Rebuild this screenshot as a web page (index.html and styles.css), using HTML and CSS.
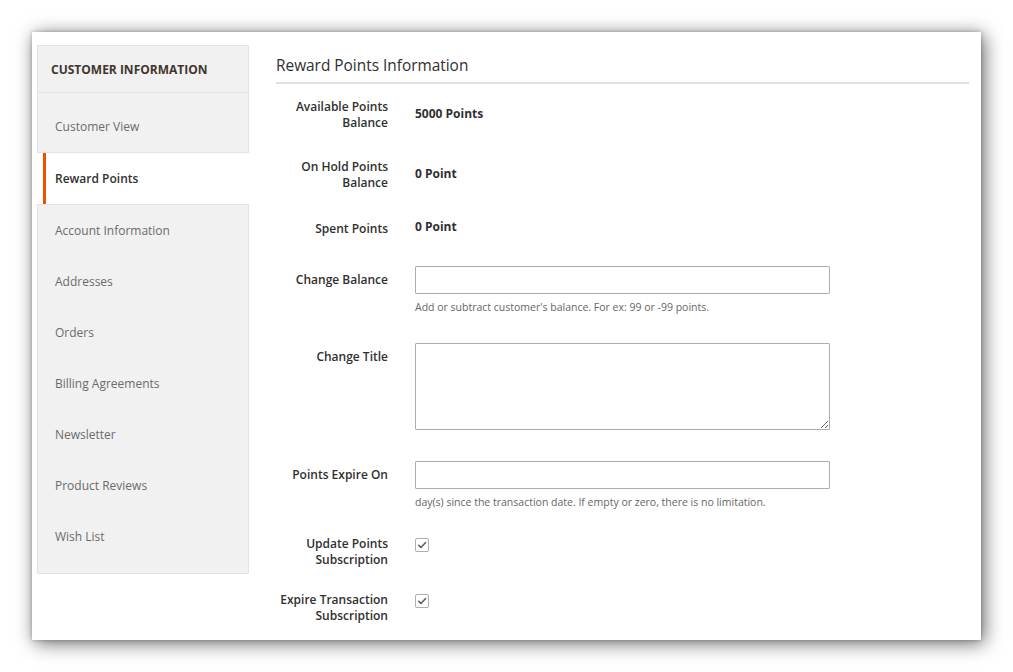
FILE: index.html
```html
<!DOCTYPE html>
<html lang="en">
<head>
<meta charset="utf-8">
<title>Reward Points Information</title>
<link rel="stylesheet" href="styles.css">
</head>
<body>
<div class="card">
  <aside class="sidebar">
    <div class="nav-group">
      <div class="nav-title">CUSTOMER INFORMATION</div>
      <ul class="nav-list">
        <li class="nav-item">Customer View</li>
      </ul>
    </div>
    <div class="nav-active">Reward Points</div>
    <div class="nav-group">
      <ul class="nav-list nav-list--rest">
        <li class="nav-item">Account Information</li>
        <li class="nav-item">Addresses</li>
        <li class="nav-item">Orders</li>
        <li class="nav-item">Billing Agreements</li>
        <li class="nav-item">Newsletter</li>
        <li class="nav-item">Product Reviews</li>
        <li class="nav-item">Wish List</li>
      </ul>
    </div>
  </aside>
  <main class="main">
    <h2 class="legend">Reward Points Information</h2>
    <div class="form">
      <div class="field field--static">
        <div class="label">Available Points<br>Balance</div>
        <div class="value">5000 Points</div>
      </div>
      <div class="field field--static">
        <div class="label">On Hold Points<br>Balance</div>
        <div class="value">0 Point</div>
      </div>
      <div class="field field--static">
        <div class="label">Spent Points</div>
        <div class="value">0 Point</div>
      </div>
      <div class="field">
        <div class="label label--input">Change Balance</div>
        <div class="control">
          <input class="text-input" type="text">
          <div class="note">Add or subtract customer's balance. For ex: 99 or -99 points.</div>
        </div>
      </div>
      <div class="field field--textarea">
        <div class="label label--input">Change Title</div>
        <div class="control">
          <textarea class="text-area"></textarea>
        </div>
      </div>
      <div class="field field--last-input">
        <div class="label label--input">Points Expire On</div>
        <div class="control">
          <input class="text-input" type="text">
          <div class="note">day(s) since the transaction date. If empty or zero, there is no limitation.</div>
        </div>
      </div>
      <div class="field field--check">
        <div class="label">Update Points<br>Subscription</div>
        <div class="control">
          <span class="checkbox"><svg width="12" height="12" viewBox="0 0 12 12"><path d="M2.6 6.2 L5 8.4 L9.6 3.6" fill="none" stroke="#5a5a5a" stroke-width="1.5" stroke-linecap="round" stroke-linejoin="round"/></svg></span>
        </div>
      </div>
      <div class="field field--check">
        <div class="label">Expire Transaction<br>Subscription</div>
        <div class="control">
          <span class="checkbox"><svg width="12" height="12" viewBox="0 0 12 12"><path d="M2.6 6.2 L5 8.4 L9.6 3.6" fill="none" stroke="#5a5a5a" stroke-width="1.5" stroke-linecap="round" stroke-linejoin="round"/></svg></span>
        </div>
      </div>
    </div>
  </main>
</div>
</body>
</html>
```

FILE: styles.css
```css
* { box-sizing: border-box; }

html, body {
  margin: 0;
  background: #ffffff;
}

body {
  padding: 32px;
  font-family: "Open Sans", "Liberation Sans", sans-serif;
  color: #303030;
}

.card {
  width: 949px;
  height: 608px;
  background: #ffffff;
  box-shadow: 3px 3px 18px rgba(0, 0, 0, 0.6), 0 0 4px rgba(0, 0, 0, 0.25);
  display: flex;
  align-items: flex-start;
  padding: 13px 12px 0 5px;
  overflow: hidden;
}

/* Sidebar */
.sidebar {
  width: 212px;
  flex: none;
  display: flex;
  flex-direction: column;
}

.nav-group {
  background: #f1f1f1;
  border: 1px solid #e3e3e3;
}

.nav-title {
  height: 47px;
  line-height: 47px;
  padding: 0 13px;
  border-bottom: 1px solid #e3e3e3;
  font-size: 12px;
  font-weight: 700;
  color: #41362f;
}

.nav-list {
  list-style: none;
  margin: 0;
  padding: 8px 0 0;
}

.nav-list--rest {
  padding: 0 0 11px;
}

.nav-item {
  height: 51px;
  line-height: 51px;
  padding-left: 17px;
  font-size: 12px;
  color: #6b6b6b;
}

.nav-active {
  height: 51px;
  line-height: 51px;
  margin-left: 6px;
  border-left: 3px solid #eb5202;
  padding-left: 9px;
  background: #ffffff;
  font-size: 12px;
  font-weight: 600;
  color: #303030;
}

/* Main */
.main {
  flex: 1;
  margin-left: 27px;
  margin-top: 11px;
}

.legend {
  margin: 0;
  font-size: 15.4px;
  font-weight: 400;
  line-height: 20px;
  color: #303030;
  padding-bottom: 6px;
  border-bottom: 2px solid #e2e0d9;
}

.form {
  padding-top: 15px;
}

.field {
  display: flex;
  align-items: flex-start;
  gap: 27px;
  margin-bottom: 28px;
}

.field--static {
  align-items: center;
}

.field--textarea {
  margin-bottom: 31px;
}

.field--last-input {
  margin-bottom: 26px;
}

.field--check {
  margin-bottom: 24px;
}

.label {
  width: 112px;
  flex: none;
  text-align: right;
  font-size: 12px;
  font-weight: 600;
  line-height: 16px;
  color: #303030;
}

.label--input {
  padding-top: 6px;
}

.value {
  font-size: 12px;
  font-weight: 700;
  line-height: 16px;
  margin-bottom: 3px;
  color: #303030;
}

.control {
  width: 415px;
}

.text-input {
  display: block;
  width: 415px;
  height: 28px;
  margin: 0;
  border: 1px solid #adadad;
  border-radius: 1px;
  background: #ffffff;
  font: 12px "Open Sans", sans-serif;
  padding: 0 8px;
}

.text-area {
  display: block;
  width: 415px;
  height: 87px;
  margin: 0;
  border: 1px solid #adadad;
  border-radius: 1px;
  background: #ffffff;
  font: 12px "Open Sans", sans-serif;
  resize: both;
}

.note {
  margin-top: 5px;
  font-size: 10.5px;
  line-height: 16px;
  color: #666666;
}

.checkbox {
  display: flex;
  align-items: center;
  justify-content: center;
  width: 14px;
  height: 14px;
  margin-top: 2px;
  border: 1px solid #adadad;
  border-radius: 2px;
  background: #ffffff;
}
```
